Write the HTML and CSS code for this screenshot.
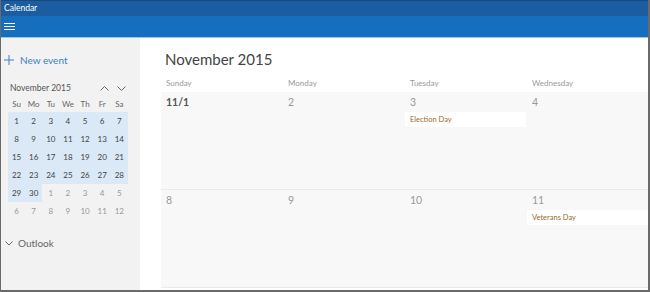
FILE: index.html
```html
<!DOCTYPE html>
<html lang="en">
<head>
    <meta charset="UTF-8">
    <meta name="viewport" content="width=device-width, initial-scale=1.0">
    <title>Calendar</title>
    <link rel="stylesheet" href="styles.css">
</head>
<body>
    <div class="window">
        <div class="titlebar">Calendar</div>
        <div class="toolbar">
            <svg class="hamburger" width="11" height="9" viewBox="0 0 11 9">
                <path d="M0 1.5h11M0 4.5h11M0 7.5h11" stroke="#ffffff" stroke-width="1"/>
            </svg>
        </div>
        <div class="app">
            <div class="sidebar">
                <div class="new-event">
                    <svg width="10" height="10" viewBox="0 0 10 10">
                        <path d="M5 0v10M0 5h10" stroke="#3a7fc8" stroke-width="1"/>
                    </svg>
                    <span>New event</span>
                </div>

                <div class="mini-head">
                    <span>November 2015</span>
                    <div class="mini-arrows">
                        <svg width="9" height="5" viewBox="0 0 9 5"><path d="M0.5 4.5l4-4 4 4" fill="none" stroke="#666" stroke-width="1"/></svg>
                        <svg width="9" height="5" viewBox="0 0 9 5"><path d="M0.5 0.5l4 4 4-4" fill="none" stroke="#666" stroke-width="1"/></svg>
                    </div>
                </div>
                <div class="mini-grid">
                    <span class="dow">Su</span><span class="dow">Mo</span><span class="dow">Tu</span><span class="dow">We</span><span class="dow">Th</span><span class="dow">Fr</span><span class="dow">Sa</span>
                    <span class="in">1</span><span class="in">2</span><span class="in">3</span><span class="in">4</span><span class="in">5</span><span class="in">6</span><span class="in">7</span>
                    <span class="in">8</span><span class="in">9</span><span class="in">10</span><span class="in">11</span><span class="in">12</span><span class="in">13</span><span class="in">14</span>
                    <span class="in">15</span><span class="in">16</span><span class="in">17</span><span class="in">18</span><span class="in">19</span><span class="in">20</span><span class="in">21</span>
                    <span class="in">22</span><span class="in">23</span><span class="in">24</span><span class="in">25</span><span class="in">26</span><span class="in">27</span><span class="in">28</span>
                    <span class="in">29</span><span class="in">30</span><span>1</span><span>2</span><span>3</span><span>4</span><span>5</span>
                    <span>6</span><span>7</span><span>8</span><span>9</span><span>10</span><span>11</span><span>12</span>
                </div>

                <div class="outlook">
                    <svg width="8" height="5" viewBox="0 0 8 5"><path d="M0.5 0.5l3.5 3.5 3.5-3.5" fill="none" stroke="#666" stroke-width="1"/></svg>
                    <span>Outlook</span>
                </div>
            </div>

            <div class="main">
                <h1>November 2015</h1>
                <div class="month">
                    <div class="dayname">Sunday</div>
                    <div class="dayname">Monday</div>
                    <div class="dayname">Tuesday</div>
                    <div class="dayname">Wednesday</div>

                    <div class="day"><div class="num first">11/1</div></div>
                    <div class="day"><div class="num">2</div></div>
                    <div class="day"><div class="num">3</div><div class="event">Election Day</div></div>
                    <div class="day"><div class="num">4</div></div>

                    <div class="day"><div class="num">8</div></div>
                    <div class="day"><div class="num">9</div></div>
                    <div class="day"><div class="num">10</div></div>
                    <div class="day"><div class="num">11</div><div class="event">Veterans Day</div></div>
                </div>
            </div>
        </div>
    </div>
</body>
</html>
```

FILE: styles.css
```css
* {
    box-sizing: border-box;
}

body {
    margin: 0;
    width: 650px;
    height: 292px;
    overflow: hidden;
    font-family: 'Lato', 'Open Sans', sans-serif;
    background: #ffffff;
}

.window {
    width: 650px;
    height: 292px;
    display: flex;
    flex-direction: column;
    border-left: 1px solid #6a6a6a;
    border-right: 2px solid #6a6a6a;
    border-bottom: 2px solid #6a6a6a;
    overflow: hidden;
}

.titlebar {
    height: 16px;
    background-color: #1b5da0;
    border-top: 1px solid #17497c;
    color: #ffffff;
    font-size: 8.5px;
    line-height: 14px;
    padding-left: 3px;
}

.toolbar {
    height: 22px;
    background-color: #166ebf;
    border-bottom: 1px solid #9fc4e8;
    padding: 6px 0 0 3px;
}

.hamburger {
    display: block;
}

.app {
    flex: 1;
    display: flex;
    min-height: 0;
}

/* left pane */
.sidebar {
    width: 139px;
    flex-shrink: 0;
    background-color: #f2f2f2;
    padding-top: 16px;
}

.new-event {
    display: flex;
    align-items: center;
    height: 12px;
    padding-left: 3px;
    color: #3a7fc8;
    font-size: 10px;
}

.new-event svg {
    margin-right: 6px;
}

.mini-head {
    display: flex;
    justify-content: space-between;
    align-items: center;
    margin-top: 15px;
    padding: 0 14px 0 9px;
    height: 14px;
    font-size: 8.5px;
    color: #555;
}

.mini-arrows {
    display: flex;
    gap: 8px;
}

.mini-arrows svg {
    display: block;
}

.mini-grid {
    display: grid;
    grid-template-columns: repeat(7, 17.14px);
    grid-template-rows: 16px;
    grid-auto-rows: 18px;
    margin: 1px 0 0 7px;
    width: 120px;
    font-size: 8px;
    color: #999;
}

.mini-grid span {
    display: flex;
    align-items: center;
    justify-content: center;
}

.mini-grid .dow {
    color: #666;
}

.mini-grid .in {
    background-color: #dbe8f5;
    color: #444;
}

.outlook {
    display: flex;
    align-items: center;
    margin-top: 16px;
    height: 14px;
    padding-left: 4px;
    font-size: 10px;
    color: #666;
}

.outlook svg {
    margin-right: 5px;
}

/* month view */
.main {
    flex: 1;
    overflow: hidden;
    padding-left: 21px;
}

.main h1 {
    margin: 0;
    height: 36px;
    padding: 12px 0 0 4px;
    font-size: 15px;
    font-weight: 400;
    color: #444;
    line-height: 18px;
    white-space: nowrap;
}

.month {
    display: grid;
    grid-template-columns: repeat(4, 122px);
    grid-template-rows: 18px 98px 98px;
}

.dayname {
    font-size: 8px;
    color: #999;
    padding: 4px 0 0 5px;
}

.day {
    background-color: #f8f8f8;
    border-bottom: 1px solid #ebebeb;
}

.num {
    padding: 3px 0 0 5px;
    height: 20px;
    font-size: 10.5px;
    line-height: 14px;
    color: #999;
}

.num.first {
    font-weight: 700;
    color: #555;
}

.event {
    height: 15px;
    margin-right: 1px;
    background-color: #ffffff;
    padding-left: 5px;
    font-size: 7.5px;
    line-height: 15px;
    color: #9a6b1d;
}
```
